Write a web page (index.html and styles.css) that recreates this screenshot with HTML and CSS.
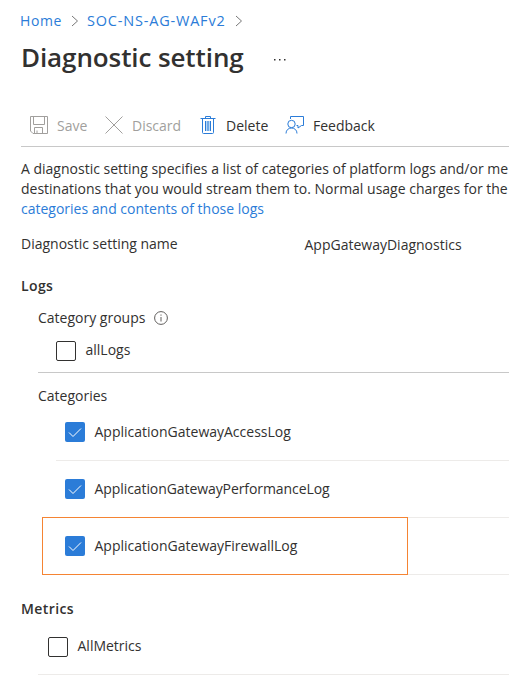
FILE: index.html
```html
<!DOCTYPE html>
<html lang="en">
<head>
<meta charset="utf-8">
<title>Diagnostic setting</title>
<link rel="stylesheet" href="styles.css">
</head>
<body>
<nav class="breadcrumb">
  <a class="home">Home</a>
  <svg class="chevron" width="8" height="12" viewBox="0 0 8 12"><path d="M1 1l5.500 5L1 11"/></svg>
  <a class="resource">SOC-NS-AG-WAFv2</a>
  <svg class="chevron" width="8" height="12" viewBox="0 0 8 12"><path d="M1 1l5.500 5L1 11"/></svg>
</nav>
<header class="title-row">
  <h1>Diagnostic setting</h1>
  <svg class="more" width="12" height="4" viewBox="0 0 12 4"><path d="M0 1h1.500v1.500H0zM5 1h1.500v1.500H5zM10 1h1.500v1.500H10z"/></svg>
</header>
<div class="toolbar">
  <div class="command save disabled">
    <svg width="20" height="20" viewBox="0 0 20 20"><path d="M1.500 1.500h17v17H4l-2.500-2.500zM4.500 1.500v8h11v-8M5.500 18.500v-6h8v6M8 18v-2.500"/></svg>
    <span>Save</span>
  </div>
  <div class="command discard disabled">
    <svg width="20" height="20" viewBox="0 0 20 20"><path d="M1.500 1.500l17 17M18.500 1.500l-17 17"/></svg>
    <span>Discard</span>
  </div>
  <div class="command delete">
    <svg width="16" height="20" viewBox="0 0 16 20"><path class="tint" d="M5 6h6v10H5z"/><path d="M.500 3.500h15M5.500 3V1.500h5V3M2.500 3.500v14q0 1 1 1h9q1 0 1-1v-14M5.500 6v10M8 6v10M10.500 6v10"/></svg>
    <span>Delete</span>
  </div>
  <div class="command feedback">
    <svg width="20" height="20" viewBox="0 0 20 20"><path d="M5.500 4V1.500h13v9h-2L13 13v-2.500h-1.500M1 18.500c0-3.500 2.500-5.500 5.500-5.500s5.500 2 5.500 5.500"/><circle cx="6.500" cy="9" r="3.700"/></svg>
    <span>Feedback</span>
  </div>
</div>
<p class="description"><span class="line">A diagnostic setting specifies a list of categories of platform logs and/or me</span><span class="line">destinations that you would stream them to. Normal usage charges for the</span><a class="line">categories and contents of those logs</a></p>
<div class="name-row"><div class="name-label">Diagnostic setting name</div><div class="name-value">AppGatewayDiagnostics</div></div>
<section>
  <h2 class="logs">Logs</h2>
  <div class="groups">
    <div class="group-label"><span class="group-text">Category groups</span>
      <svg class="info" width="14" height="14" viewBox="0 0 14 14"><circle cx="7" cy="7" r="6.400"/><path d="M7 6v4.500M7 3.500v1.200"/></svg>
    </div>
    <div class="option all-logs"><i class="box"></i><span>allLogs</span></div>
  </div>
  <div class="categories">
    <div class="categories-label">Categories</div>
    <div class="option category"><i class="box checked"><svg width="20" height="20" viewBox="0 0 20 20"><path d="M4 10.500l4 4 8-8"/></svg></i><span>ApplicationGatewayAccessLog</span></div>
    <div class="option category"><i class="box checked"><svg width="20" height="20" viewBox="0 0 20 20"><path d="M4 10.500l4 4 8-8"/></svg></i><span class="performance">ApplicationGatewayPerformanceLog</span></div>
    <div class="option category highlighted"><i class="box checked"><svg width="20" height="20" viewBox="0 0 20 20"><path d="M4 10.500l4 4 8-8"/></svg></i><span>ApplicationGatewayFirewallLog</span></div>
  </div>
</section>
<section>
  <h2 class="metrics">Metrics</h2>
  <div class="option all-metrics"><i class="box"></i><span>AllMetrics</span></div>
</section>
</body>
</html>
```
FILE: styles.css
```css
*, *::before { box-sizing: border-box; }
body {
  margin: 0;
  height: 682px;
  overflow: hidden;
  background: #fff;
  color: #323130;
  font: 14px/20px "Open Sans", "Noto Sans", sans-serif;
  white-space: nowrap;
}
svg { display: block; flex: none; fill: none; stroke: currentColor; }
h1, h2, p { margin: 0; }
a { color: #2b7cd8; }
.breadcrumb { display: flex; align-items: center; height: 30px; padding: 11px 0 0 20px; }
.breadcrumb .home { width: 51px; letter-spacing: 0.6px; }
.breadcrumb .resource { width: 148px; margin-left: 8px; font-size: 14.5px; letter-spacing: 0.8px; }
.chevron { color: #777; }
.title-row { display: flex; align-items: center; height: 56px; padding-left: 21px; }
h1 { width: 253px; margin-top: -2px; font-size: 26px; line-height: 34px; font-weight: 600; letter-spacing: -0.1px; }
.more { margin-top: 4px; fill: #323130; stroke: none; }
.toolbar { display: flex; align-items: center; height: 61px; margin-left: 21px; padding: 18px 0 0 8px; border-bottom: 1px solid #c8c8c8; }
.command { display: flex; align-items: center; }
.command span { padding-top: 1px; }
.command svg { color: #2b7cd8; }
.disabled, .command.disabled svg { color: #a19f9d; }
.save { width: 75px; gap: 8px; }
.discard { width: 96px; gap: 8px; }
.delete { width: 85px; gap: 10px; }
.feedback { gap: 8px; }
.tint { fill: #b9d8f5; stroke: none; }
.description { height: 75px; padding: 12px 0 0 21px; }
.line { display: block; width: max-content; }
.name-row { display: flex; height: 42px; padding: 12px 0 0 21px; }
.name-label { width: 283.500px; }
.name-value { padding-top: 1px; }
h2 { padding-left: 21px; font-size: 14px; line-height: 20px; font-weight: 600; letter-spacing: 0.4px; }
.logs { height: 32px; padding-top: 12px; }
.groups { height: 77px; margin-left: 38px; padding-top: 12px; border-bottom: 1px solid #c8c8c8; }
.group-label { display: flex; align-items: center; gap: 8px; }
.group-text { width: 108px; }
.info { color: #605e5c; }
.option { display: flex; align-items: center; }
.box { width: 20px; height: 20px; flex: none; border: 1px solid #323130; border-radius: 2px; }
.checked { border: 0; background: #2b7cd8; color: #fff; }
.all-logs { gap: 9.500px; height: 20px; margin: 13px 0 0 18px; }
.all-logs span { margin-top: -2px; }
.categories { padding-top: 13px; }
.categories-label { height: 18px; padding-left: 38px; }
.category { gap: 9.500px; height: 57px; margin-left: 56px; padding-left: 9px; border-bottom: 1px solid #edebe9; position: relative; }
.performance { letter-spacing: -0.08px; }
.highlighted::before { content: ""; position: absolute; left: -14px; top: -1px; width: 366px; height: 58px; border: 1px solid #f58433; }
.metrics { height: 44px; padding-top: 24px; }
.all-metrics { gap: 9.500px; height: 56px; margin-left: 38px; padding-left: 10px; border-bottom: 1px solid #edebe9; }
.all-metrics span { margin-top: -2px; }
```
